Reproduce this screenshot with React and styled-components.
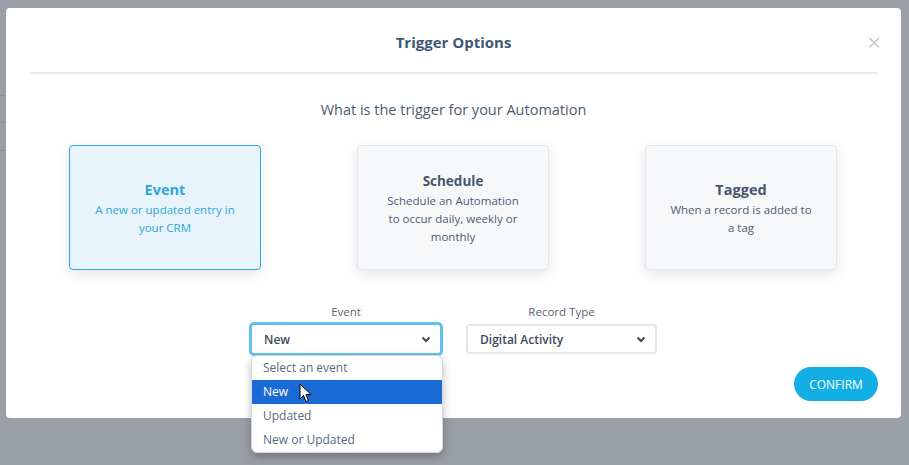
import styled, { createGlobalStyle } from "styled-components"

const Global = createGlobalStyle`
  html, body { margin: 0; padding: 0; }
  body {
    font-family: "Open Sans", "Noto Sans", sans-serif;
    background: #9a9ea6;
    width: 909px;
    height: 465px;
    overflow: hidden;
  }
`

const Backdrop = styled.div`
  position: relative;
  width: 909px;
  height: 465px;
  padding: 8px 8px 0 6px;
  box-sizing: border-box;
  background: #9a9ea6;
`

const BgLine = styled.div`
  position: absolute;
  left: 0;
  width: 6px;
  top: ${p => p.top}px;
  height: 1px;
  background: #8c9098;
`

const Modal = styled.div`
  position: relative;
  width: 895px;
  height: 410px;
  background: #fff;
  border-radius: 4px;
  display: flex;
  flex-direction: column;
`

const Header = styled.div`
  height: 64px;
  margin: 0 24px;
  border-bottom: 2px solid #e8e9ec;
  display: flex;
  align-items: center;
  justify-content: center;
  position: relative;
`

const Title = styled.h2`
  margin: 0;
  padding-top: 4px;
  font-size: 15px;
  font-weight: 700;
  color: #3f5776;
`

const Close = styled.span`
  position: absolute;
  right: -4px;
  top: 22px;
  font-size: 24px;
  line-height: 24px;
  color: #c9ccd2;
`

const Question = styled.p`
  margin: 26px 0 0;
  text-align: center;
  font-size: 14.5px;
  color: #4c5d72;
`

const Cards = styled.div`
  display: flex;
  justify-content: center;
  gap: 96px;
  margin-top: 26px;
  padding-right: 1px;
`

const Card = styled.div`
  width: 192px;
  height: 125px;
  box-sizing: border-box;
  border-radius: 4px;
  border: 1px solid ${p => (p.active ? "#2ea8df" : "#e4e7eb")};
  background: ${p => (p.active ? "#e8f4fb" : "#f7f8fa")};
  box-shadow: 0 4px 12px rgba(40, 50, 70, 0.12);
  display: flex;
  flex-direction: column;
  align-items: center;
  justify-content: center;
  text-align: center;
  padding: 0 23px;
  color: ${p => (p.active ? "#2ea6dc" : "#4d5d72")};
`

const CardTitle = styled.div`
  font-size: ${p => (p.big ? 14.5 : 13.5)}px;
  font-weight: 700;
  line-height: 22px;
  color: ${p => (p.active ? "#2ea6dc" : "#46566d")};
`

const CardText = styled.div`
  font-size: 11.5px;
  line-height: 18px;
`

const FormRow = styled.div`
  display: flex;
  justify-content: center;
  gap: 23px;
  margin-top: 34px;
  padding-right: 1px;
`

const Field = styled.div`
  position: relative;
  display: flex;
  flex-direction: column;
  align-items: center;
  width: ${p => p.w}px;
`

const Label = styled.label`
  font-size: 11.5px;
  line-height: 16px;
  color: #5a6472;
  margin-bottom: ${p => p.mb}px;
`

const Select = styled.div`
  width: 100%;
  box-sizing: border-box;
  height: ${p => (p.focused ? 34 : 30)}px;
  border: ${p => (p.focused ? "3px solid #62c2ec" : "2px solid #e3e6ea")};
  border-radius: ${p => (p.focused ? 5 : 4)}px;
  display: flex;
  align-items: center;
  justify-content: space-between;
  padding: 0 9px 0 12px;
  font-size: 12px;
  font-weight: 600;
  color: #3e4b5c;
  background: #fff;
`

const Chevron = () => (
  <svg width="10" height="7" viewBox="0 0 10 7">
    <path d="M1.5 1.5 L5 5 L8.5 1.5" fill="none" stroke="#3e4b5c" strokeWidth="2" />
  </svg>
)

const Menu = styled.ul`
  position: absolute;
  top: 51px;
  left: 2px;
  width: 190px;
  margin: 0;
  padding: 0;
  list-style: none;
  background: #fff;
  border: 1px solid #d5d8dd;
  border-radius: 6px;
  box-shadow: 0 4px 10px rgba(0, 0, 0, 0.25);
  overflow: hidden;
  z-index: 5;
`

const Option = styled.li`
  height: 24px;
  line-height: 24px;
  padding-left: 11px;
  font-size: 12px;
  color: ${p => (p.selected ? "#fff" : "#5a6a80")};
  background: ${p => (p.selected ? "#1a6ad5" : "transparent")};
`

const Pointer = styled.svg`
  position: absolute;
  left: 47px;
  top: 27px;
`

const Footer = styled.div`
  display: flex;
  justify-content: flex-end;
  padding: 11px 23px 0 0;
`

const Confirm = styled.button`
  width: 84px;
  height: 34px;
  border: none;
  border-radius: 17px;
  background: #13aee4;
  color: #fff;
  font-family: inherit;
  font-size: 12px;
  padding: 0;
`

export default function App() {
  return (
    <Backdrop>
      <Global />
      <BgLine top={95} />
      <BgLine top={122} />
      <BgLine top={150} />
      <Modal>
        <Header>
          <Title>Trigger Options</Title>
          <Close>×</Close>
        </Header>
        <Question>What is the trigger for your Automation</Question>
        <Cards>
          <Card active>
            <CardTitle active big>Event</CardTitle>
            <CardText>A new or updated entry in your CRM</CardText>
          </Card>
          <Card>
            <CardTitle>Schedule</CardTitle>
            <CardText>Schedule an Automation to occur daily, weekly or monthly</CardText>
          </Card>
          <Card>
            <CardTitle big>Tagged</CardTitle>
            <CardText>When a record is added to a tag</CardText>
          </Card>
        </Cards>
        <FormRow>
          <Field w={194}>
            <Label mb={2}>Event</Label>
            <Select focused>
              <span>New</span>
              <Chevron />
            </Select>
            <Menu>
              <Option>Select an event</Option>
              <Option selected>New</Option>
              <Option>Updated</Option>
              <Option>New or Updated</Option>
              <Pointer width="14" height="21" viewBox="0 0 14 21">
                <path
                  d="M1 1 L1 16 L4.5 12.5 L7 18.5 L9.5 17.5 L7 11.5 L12 11.5 Z"
                  fill="#fff"
                  stroke="#000"
                  strokeWidth="1"
                  strokeLinejoin="round"
                />
              </Pointer>
            </Menu>
          </Field>
          <Field w={191}>
            <Label mb={4}>Record Type</Label>
            <Select>
              <span>Digital Activity</span>
              <Chevron />
            </Select>
          </Field>
        </FormRow>
        <Footer>
          <Confirm>CONFIRM</Confirm>
        </Footer>
      </Modal>
    </Backdrop>
  )
}
